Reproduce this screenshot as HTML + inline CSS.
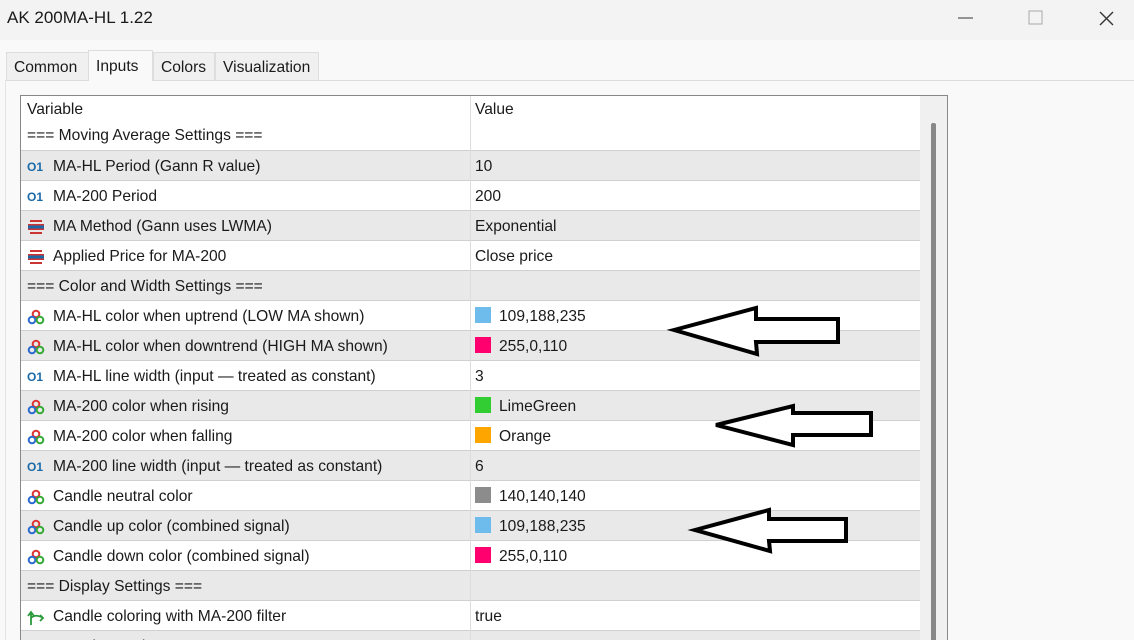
<!DOCTYPE html>
<html style="overflow:hidden;width:1134px;height:640px"><head><style>
body{margin:0;width:1134px;height:640px;overflow:hidden;background:#f9f9f9;font-family:"Liberation Sans",sans-serif;font-size:15.6px;color:#1a1a1a;position:relative}
.title{position:absolute;left:0;top:0;width:1134px;height:40px;background:#f3f3f3}
.title span{position:absolute;left:7px;top:8px;font-size:17px}
.tab{position:absolute;top:52px;height:28px;background:#f0f0f0;border:1px solid #ddd;border-bottom:none;line-height:30px;padding:0 7px;box-sizing:border-box}
.tab.act{background:#f9f9f9;top:50px;height:31px;line-height:31px}
.panel{position:absolute;left:5px;top:80px;width:1129px;height:560px;border-top:1px solid #ddd;border-left:1px solid #e4e4e4}
.tbl{position:absolute;left:20px;top:95px;width:926px;height:545px;overflow:hidden;border:1px solid #888;border-bottom:none;background:#fff}
.row{position:absolute;left:0;width:899px;height:30px;line-height:32px;border-bottom:1px solid #d0d0d0;box-sizing:border-box}
.g{background:#e9e9e9}
.c1{position:absolute;left:6px}
.c2{position:absolute;left:454px}
.sep{position:absolute;left:449px;top:0;width:1px;height:560px;background:#ddd}
.sb{position:absolute;left:899px;top:0;width:27px;height:560px;background:#f0f0f0}
.th{position:absolute;left:11px;top:27px;width:5px;height:540px;background:#888;border-radius:2px}
.ic{display:inline-block;width:20px;margin-right:6px;vertical-align:middle;font-size:12px;color:#1a6aa8;font-weight:bold}
.sw{display:inline-block;width:16px;height:16px;vertical-align:middle;margin:-3px 8px 0 0}
</style></head><body>
<div class="title"><span>AK 200MA-HL 1.22</span>
<svg style="position:absolute;left:958px;top:10px" width="160" height="20"><line x1="0" y1="8" x2="15" y2="8" stroke="#333"/><rect x="71" y="1" width="13" height="13" fill="none" stroke="#aaa"/><path d="M142 2 L155 15 M155 2 L142 15" stroke="#333" stroke-width="1.4"/></svg></div>
<div class="panel"></div>
<div class="tab" style="left:6px;width:83px">Common</div>
<div class="tab act" style="left:88px;width:65px">Inputs</div>
<div class="tab" style="left:153px;width:62px">Colors</div>
<div class="tab" style="left:215px;width:104px">Visualization</div>
<div class="tbl">
<div class="row" style="top:0;height:26px;line-height:28px;border:none"><span class="c1">Variable</span><span class="c2">Value</span></div>
<div class="row" style="top:26px;height:29px;line-height:28px"><span class="c1">=== Moving Average Settings ===</span></div>
<div class="row g" style="top:55px"><span class="c1"><span class="ic">O1</span>MA-HL Period (Gann R value)</span><span class="c2">10</span></div>
<div class="row" style="top:85px"><span class="c1"><span class="ic">O1</span>MA-200 Period</span><span class="c2">200</span></div>
<div class="row g" style="top:115px"><span class="c1"><svg class="ic" height="16" viewBox="0 0 20 16"><path d="M3 2h12M1 6h16M1 10h16M3 14h12" stroke="#c33" stroke-width="2"/><path d="M1 8h16" stroke="#1a6aa8" stroke-width="3"/></svg>MA Method (Gann uses LWMA)</span><span class="c2">Exponential</span></div>
<div class="row" style="top:145px"><span class="c1"><svg class="ic" height="16" viewBox="0 0 20 16"><path d="M3 2h12M1 6h16M1 10h16M3 14h12" stroke="#c33" stroke-width="2"/><path d="M1 8h16" stroke="#1a6aa8" stroke-width="3"/></svg>Applied Price for MA-200</span><span class="c2">Close price</span></div>
<div class="row g" style="top:175px"><span class="c1">=== Color and Width Settings ===</span></div>
<div class="row" style="top:205px"><span class="c1"><svg class="ic" height="16" viewBox="0 0 20 16"><circle cx="9" cy="5" r="3.3" fill="none" stroke="#d33" stroke-width="2"/><circle cx="5" cy="11" r="3.3" fill="none" stroke="#2a6ad0" stroke-width="2"/><circle cx="13" cy="11" r="3.3" fill="none" stroke="#3a3" stroke-width="2"/></svg>MA-HL color when uptrend (LOW MA shown)</span><span class="c2"><span class="sw" style="background:#6dbceb"></span>109,188,235</span></div>
<div class="row g" style="top:235px"><span class="c1"><svg class="ic" height="16" viewBox="0 0 20 16"><circle cx="9" cy="5" r="3.3" fill="none" stroke="#d33" stroke-width="2"/><circle cx="5" cy="11" r="3.3" fill="none" stroke="#2a6ad0" stroke-width="2"/><circle cx="13" cy="11" r="3.3" fill="none" stroke="#3a3" stroke-width="2"/></svg>MA-HL color when downtrend (HIGH MA shown)</span><span class="c2"><span class="sw" style="background:#ff006e"></span>255,0,110</span></div>
<div class="row" style="top:265px"><span class="c1"><span class="ic">O1</span>MA-HL line width (input — treated as constant)</span><span class="c2">3</span></div>
<div class="row g" style="top:295px"><span class="c1"><svg class="ic" height="16" viewBox="0 0 20 16"><circle cx="9" cy="5" r="3.3" fill="none" stroke="#d33" stroke-width="2"/><circle cx="5" cy="11" r="3.3" fill="none" stroke="#2a6ad0" stroke-width="2"/><circle cx="13" cy="11" r="3.3" fill="none" stroke="#3a3" stroke-width="2"/></svg>MA-200 color when rising</span><span class="c2"><span class="sw" style="background:#32cd32"></span>LimeGreen</span></div>
<div class="row" style="top:325px"><span class="c1"><svg class="ic" height="16" viewBox="0 0 20 16"><circle cx="9" cy="5" r="3.3" fill="none" stroke="#d33" stroke-width="2"/><circle cx="5" cy="11" r="3.3" fill="none" stroke="#2a6ad0" stroke-width="2"/><circle cx="13" cy="11" r="3.3" fill="none" stroke="#3a3" stroke-width="2"/></svg>MA-200 color when falling</span><span class="c2"><span class="sw" style="background:#ffa500"></span>Orange</span></div>
<div class="row g" style="top:355px"><span class="c1"><span class="ic">O1</span>MA-200 line width (input — treated as constant)</span><span class="c2">6</span></div>
<div class="row" style="top:385px"><span class="c1"><svg class="ic" height="16" viewBox="0 0 20 16"><circle cx="9" cy="5" r="3.3" fill="none" stroke="#d33" stroke-width="2"/><circle cx="5" cy="11" r="3.3" fill="none" stroke="#2a6ad0" stroke-width="2"/><circle cx="13" cy="11" r="3.3" fill="none" stroke="#3a3" stroke-width="2"/></svg>Candle neutral color</span><span class="c2"><span class="sw" style="background:#8c8c8c"></span>140,140,140</span></div>
<div class="row g" style="top:415px"><span class="c1"><svg class="ic" height="16" viewBox="0 0 20 16"><circle cx="9" cy="5" r="3.3" fill="none" stroke="#d33" stroke-width="2"/><circle cx="5" cy="11" r="3.3" fill="none" stroke="#2a6ad0" stroke-width="2"/><circle cx="13" cy="11" r="3.3" fill="none" stroke="#3a3" stroke-width="2"/></svg>Candle up color (combined signal)</span><span class="c2"><span class="sw" style="background:#6dbceb"></span>109,188,235</span></div>
<div class="row" style="top:445px"><span class="c1"><svg class="ic" height="16" viewBox="0 0 20 16"><circle cx="9" cy="5" r="3.3" fill="none" stroke="#d33" stroke-width="2"/><circle cx="5" cy="11" r="3.3" fill="none" stroke="#2a6ad0" stroke-width="2"/><circle cx="13" cy="11" r="3.3" fill="none" stroke="#3a3" stroke-width="2"/></svg>Candle down color (combined signal)</span><span class="c2"><span class="sw" style="background:#ff006e"></span>255,0,110</span></div>
<div class="row g" style="top:475px"><span class="c1">=== Display Settings ===</span></div>
<div class="row" style="top:505px"><span class="c1"><svg class="ic" height="18" viewBox="0 0 20 18"><path d="M4 17V5M1 8l3-4 3 4M4 10c3-3 7-3 12 0M13 7l3 3-3 3" fill="none" stroke="#2a9a3a" stroke-width="1.8"/></svg>Candle coloring with MA-200 filter</span><span class="c2">true</span></div>
<div class="row g" style="top:535px"><span class="c1">=== Header Settings ===</span></div>
<div class="sep" style="top:0"></div>
<div class="sb"><div class="th"></div></div>
</div>
<svg style="position:absolute;left:0;top:0" width="1134" height="640">
<g fill="#fff" stroke="#000" stroke-width="4" stroke-linejoin="miter">
<polygon points="674,330 756,308 756,319 838,319 838,342 756,342 757,354"/>
<polygon points="716,425 793,406 793,413 871,413 871,435 793,435 793,445"/>
<polygon points="695,530 769,510 769,519 846,519 846,541 769,541 770,551"/>
</g></svg>
</body></html>
